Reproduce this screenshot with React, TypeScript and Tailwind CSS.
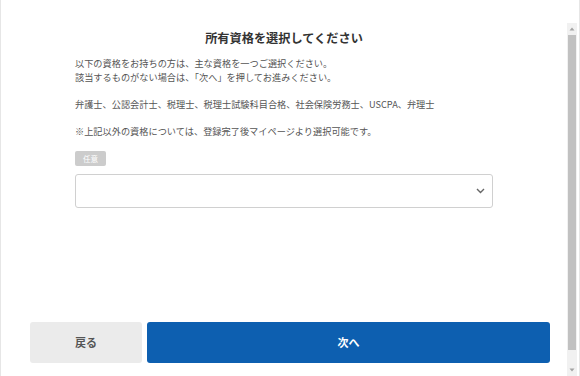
import React from 'react';

const font = { fontFamily: '"Noto Sans CJK JP", "Noto Sans", sans-serif' };

function ScrollBar(): JSX.Element {
  return (
    <div className="mt-[23px] mr-[2px] flex w-[10px] flex-col bg-[#f1f1f1]">
      <div className="flex h-[12px] items-center justify-center">
        <svg width="6" height="4" viewBox="0 0 6 4">
          <path d="M3 0.5 L5.5 3.5 L0.5 3.5 Z" fill="#a3a3a3" />
        </svg>
      </div>
      <div className="mx-[1px] h-[315px] bg-[#c1c1c1]" />
      <div className="flex-1" />
      <div className="flex h-[8px] items-start justify-center">
        <svg width="6" height="4" viewBox="0 0 6 4">
          <path d="M0.5 0.5 L5.5 0.5 L3 3.5 Z" fill="#a3a3a3" />
        </svg>
      </div>
    </div>
  );
}

export default function App(): JSX.Element {
  return (
    <div
      className="flex h-[376px] w-[580px] border-x border-[#e6e6e6] bg-white"
      style={font}
    >
      <div className="flex flex-1 flex-col">
        <h1 className="pt-[29px] text-center text-[12.2px] leading-[18px] font-bold text-[#333]">
          所有資格を選択してください
        </h1>

        <div className="px-[74px] pt-[10px]">
          <p className="text-[9.2px] leading-[13.5px] text-[#555]">
            以下の資格をお持ちの方は、主な資格を一つご選択ください。
            <br />
            該当するものがない場合は、「次へ」を押してお進みください。
            <br />
            <br />
            弁護士、公認会計士、税理士、税理士試験科目合格、社会保険労務士、USCPA、弁理士
            <br />
            <br />
            ※上記以外の資格については、登録完了後マイページより選択可能です。
          </p>

          <span className="mt-[13px] inline-flex h-[15px] w-[31px] items-center justify-center rounded-[2px] bg-[#cccccc] text-[7.5px] text-white">
            任意
          </span>

          <div className="mt-[7px] flex h-[34px] items-center justify-end rounded-[3px] border border-[#d0d0d0] bg-white pr-[7px]">
            <svg width="9" height="6" viewBox="0 0 9 6">
              <path
                d="M1 1 L4.5 4.5 L8 1"
                fill="none"
                stroke="#666"
                strokeWidth="1.4"
              />
            </svg>
          </div>
        </div>

        <div className="mt-auto flex gap-[5px] pr-[17px] pb-[13px] pl-[29px]">
          <button className="flex h-[41px] w-[112px] items-center justify-center rounded-[3px] bg-[#ebebeb] text-[11px] font-bold text-[#555]">
            戻る
          </button>
          <button className="flex h-[41px] flex-1 items-center justify-center rounded-[3px] bg-[#0d5fb0] text-[11px] font-bold text-white">
            次へ
          </button>
        </div>
      </div>
      <ScrollBar />
    </div>
  );
}
